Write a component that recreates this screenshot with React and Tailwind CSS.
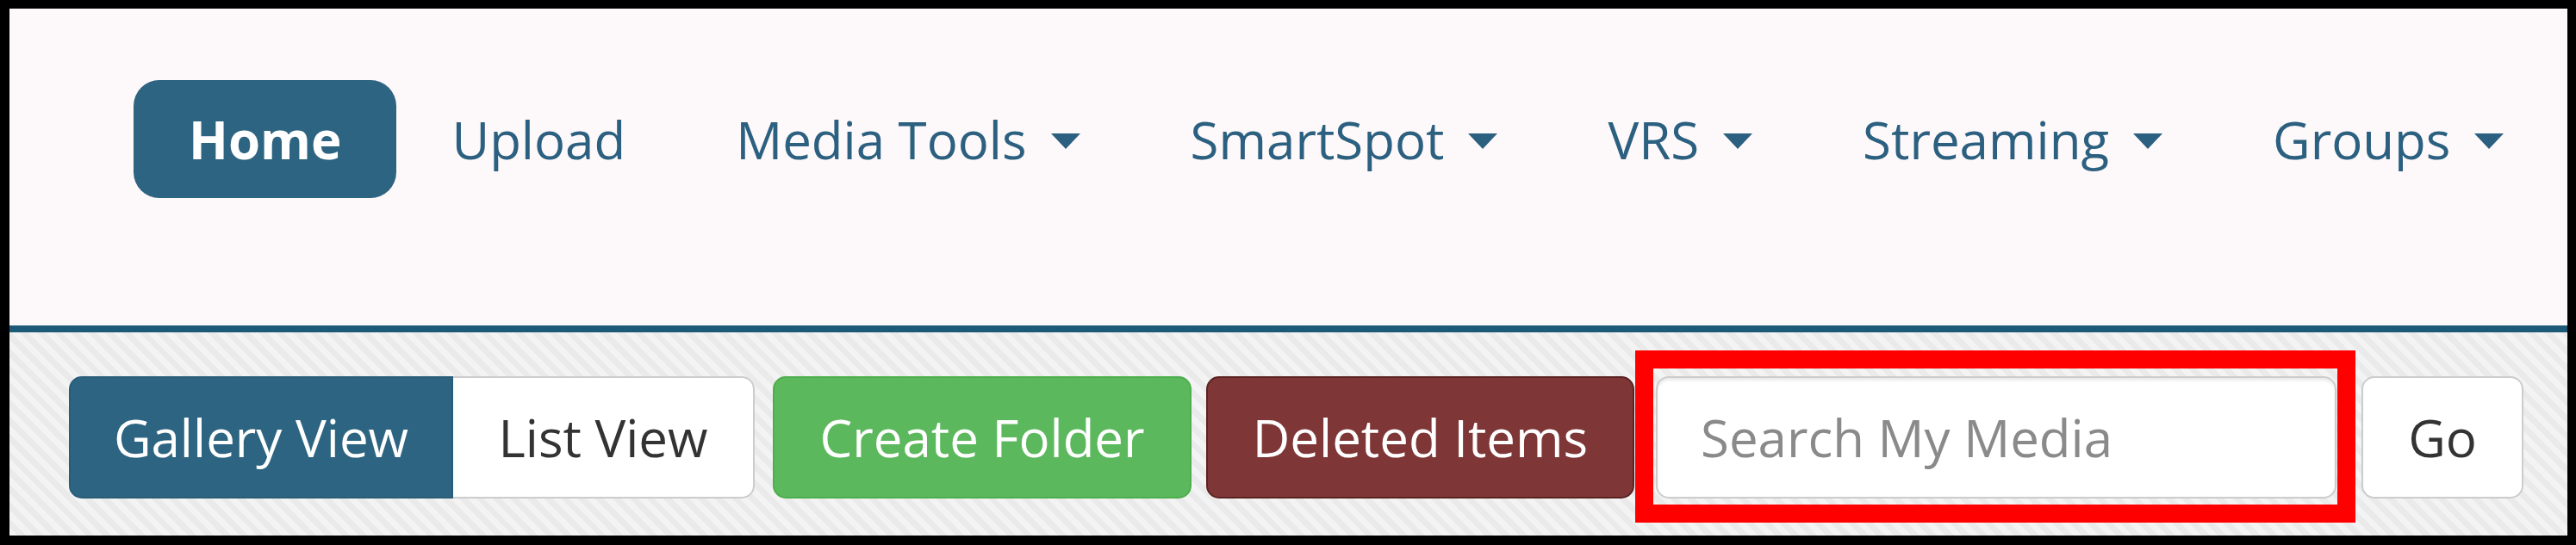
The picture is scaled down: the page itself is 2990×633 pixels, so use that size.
import React from "react"

const font = { fontFamily: '"Open Sans", "Noto Sans", sans-serif' }

const Caret = () => (
  <span className="ml-[28px] inline-block w-0 h-0 border-l-[17px] border-r-[17px] border-t-[18px] border-l-transparent border-r-transparent border-t-[#2c6080] translate-y-[2px]"></span>
)

const NavItem = ({ label, active, dropdown }) => (
  <a
    href="#"
    className={
      active
        ? "flex shrink-0 items-center whitespace-nowrap h-[137px] px-[64px] rounded-[30px] bg-[#2d6481] text-white font-bold"
        : "flex shrink-0 items-center whitespace-nowrap h-[137px] px-[64px] text-[#2c6080]"
    }
  >
    {label}
    {dropdown ? <Caret /> : null}
  </a>
)

const navItems = [
  { label: "Home", active: true },
  { label: "Upload" },
  { label: "Media Tools", dropdown: true },
  { label: "SmartSpot", dropdown: true },
  { label: "VRS", dropdown: true },
  { label: "Streaming", dropdown: true },
  { label: "Groups", dropdown: true },
]

const App = () => {
  return (
    <div
      className="w-[2990px] h-[633px] flex flex-col border-l-[11px] border-t-[10px] border-r-[10px] border-b-[11px] border-black bg-[#efefef] text-[60px] leading-[84px]"
      style={font}
    >
      {/* header / main nav */}
      <div className="h-[376px] shrink-0 bg-[#fdf8f9] pl-[144px] pt-[83px] border-b-[8px] border-[#1d5a78]">
        <nav className="flex items-center">
          {navItems.map((item) => (
            <NavItem key={item.label} {...item} />
          ))}
        </nav>
      </div>

      {/* toolbar */}
      <div className="flex-1 flex items-start whitespace-nowrap pl-[69px] pt-[51px] bg-[repeating-linear-gradient(45deg,#f3f3f3_0px,#f3f3f3_7px,#eaeaea_7px,#eaeaea_14px)]">
        <div className="flex shrink-0">
          <button className="w-[446px] h-[142px] rounded-l-[15px] bg-[#2d6481] border-2 border-[#2a5d78] text-white">
            Gallery View
          </button>
          <button className="w-[350px] h-[142px] rounded-r-[15px] bg-white border-2 border-l-0 border-[#cccccc] text-[#333333]">
            List View
          </button>
        </div>
        <button className="shrink-0 ml-[21px] w-[486px] h-[142px] rounded-[15px] bg-[#5cb85c] border-2 border-[#4cae4c] text-white">
          Create Folder
        </button>
        <button className="shrink-0 ml-[17px] w-[497px] h-[142px] rounded-[15px] bg-[#7e3636] border-2 border-[#5c2222] text-white">
          Deleted Items
        </button>
        <div className="relative shrink-0 ml-[25px]">
          <input
            type="text"
            placeholder="Search My Media"
            className="w-[790px] h-[142px] rounded-[15px] bg-white border-2 border-[#cccccc] shadow-[inset_0_3px_3px_rgba(0,0,0,0.08)] pl-[50px] text-[#555555] placeholder:text-[#8a8a8a] outline-none"
          />
          <div className="absolute -left-[24px] -right-[22px] -top-[30px] -bottom-[28px] border-[21px] border-[#ff0000] pointer-events-none"></div>
        </div>
        <button className="shrink-0 ml-[29px] w-[188px] h-[142px] rounded-[15px] bg-white border-2 border-[#cccccc] text-[#333333]">
          Go
        </button>
      </div>
    </div>
  )
}

export default App
